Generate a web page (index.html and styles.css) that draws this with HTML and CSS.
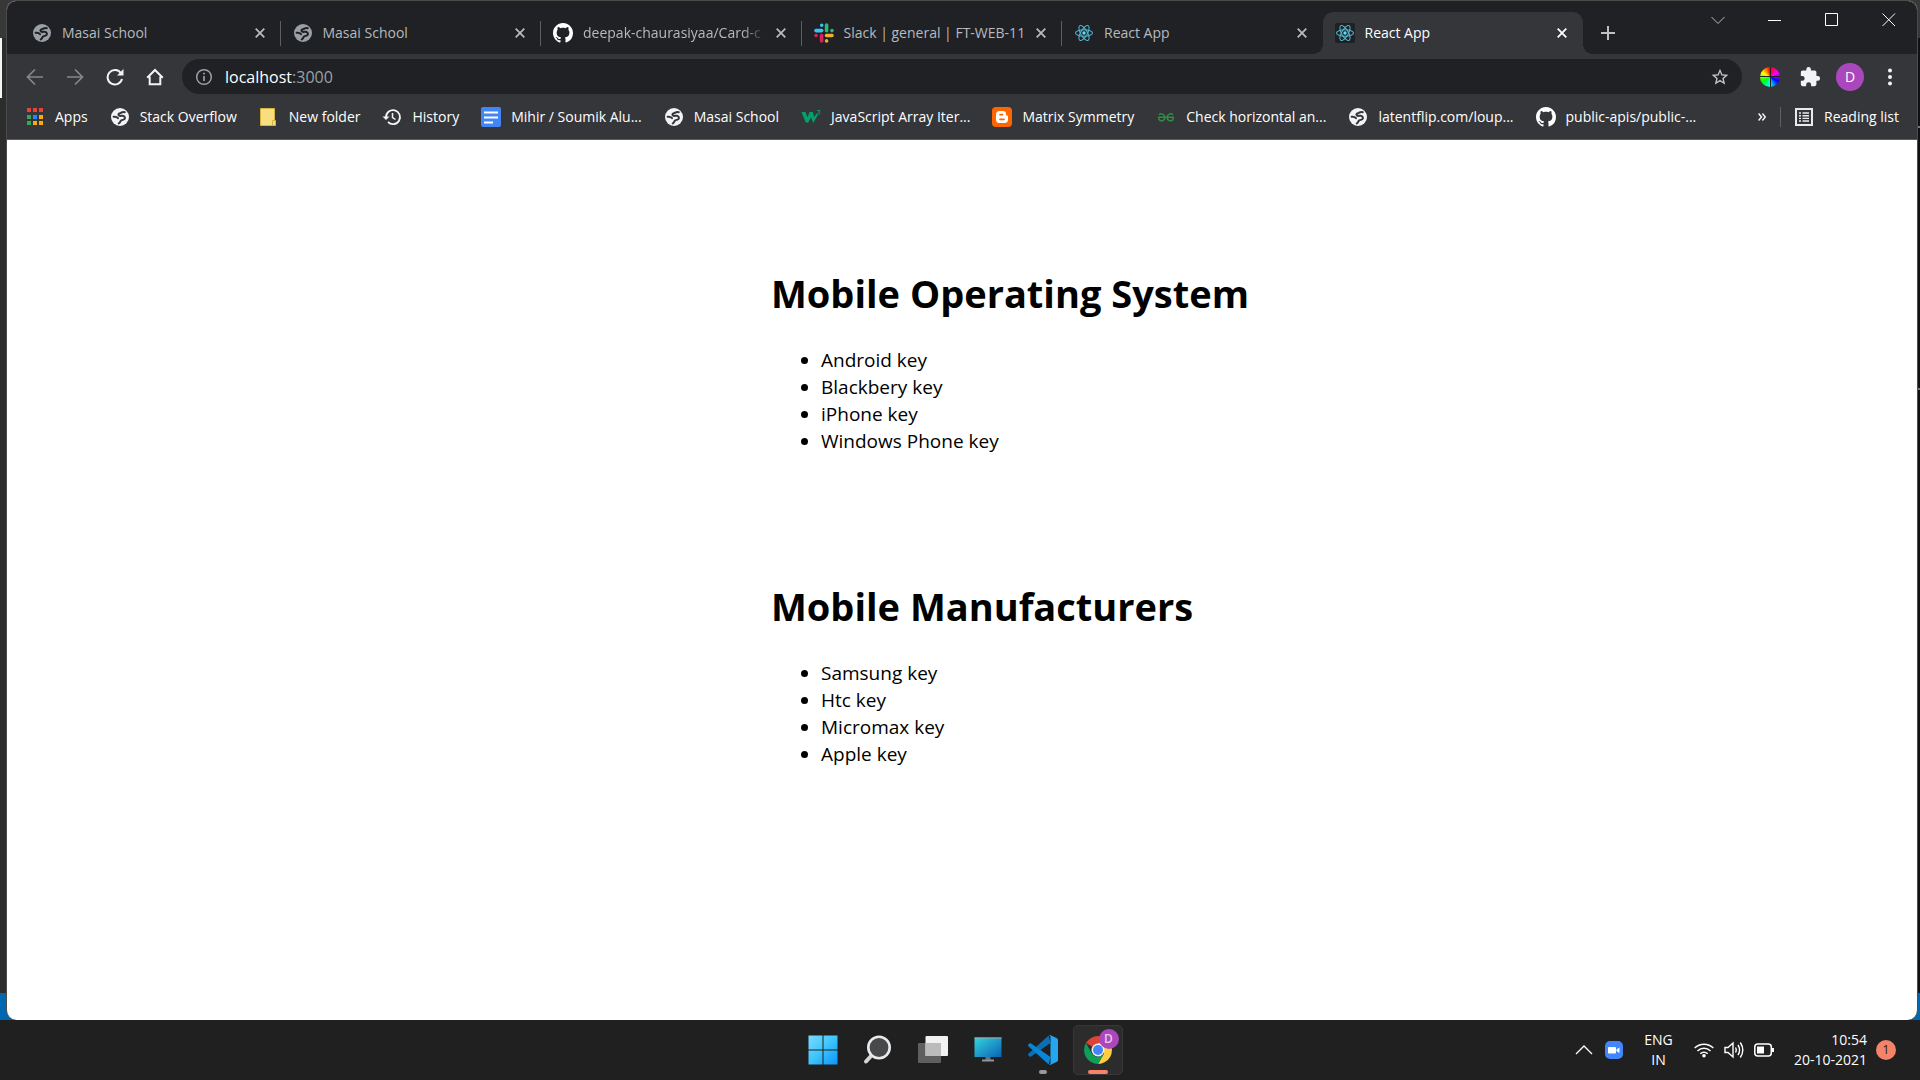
FILE: index.html
```html
<!DOCTYPE html>
<html lang="en">
<head>
<meta charset="utf-8">
<title>React App</title>
<link rel="stylesheet" href="styles.css">
</head>
<body>
<svg class="sprite" aria-hidden="true">
  <symbol id="globe" viewBox="0 0 18 18"><circle cx="9" cy="9" r="9" fill="currentColor"/><path class="globe-cut" d="M13.800 4.200C11 3.200 10.500 5 9 5.300S6.800 6.600 8 7.600s3.600-.6 5 .6 1.200 2.800-.6 3.400-2.600.6-3 1.700-1 1.700-1.700 2.200M2.600 8.800c1.600-.4 3.400.2 4.400 1.400"/></symbol>
  <symbol id="close" viewBox="0 0 10 10"><path d="M.7.7l8.600 8.600M9.300.7L.7 9.300" stroke="currentColor" stroke-width="1.800"/></symbol>
  <symbol id="github" viewBox="0 0 16 16"><path fill="currentColor" d="M8 0C3.580 0 0 3.580 0 8c0 3.540 2.290 6.530 5.470 7.590.4.070.55-.17.55-.38 0-.19-.01-.82-.01-1.490-2.010.37-2.530-.49-2.690-.94-.09-.23-.48-.94-.82-1.130-.28-.15-.68-.52-.01-.53.63-.01 1.080.58 1.230.82.72 1.210 1.870.87 2.330.66.070-.52.28-.87.51-1.070-1.780-.2-3.640-.89-3.640-3.950 0-.87.31-1.590.82-2.150-.08-.2-.36-1.020.08-2.120 0 0 .67-.21 2.200.82.64-.18 1.320-.27 2-.27s1.360.09 2 .27c1.530-1.040 2.200-.82 2.200-.82.44 1.100.16 1.920.08 2.120.51.56.82 1.270.82 2.150 0 3.070-1.870 3.750-3.650 3.950.29.25.54.73.54 1.480 0 1.070-.01 1.930-.01 2.200 0 .21.15.46.55.38A8.010 8.010 0 0 0 16 8c0-4.420-3.580-8-8-8z"/></symbol>
  <symbol id="react" viewBox="0 0 20 20"><rect width="20" height="20" rx="2" fill="#202124"/><g fill="none" stroke="#53b4cd" stroke-width="1.100"><ellipse cx="10" cy="10" rx="8.500" ry="3.300"/><ellipse cx="10" cy="10" rx="8.500" ry="3.300" transform="rotate(60 10 10)"/><ellipse cx="10" cy="10" rx="8.500" ry="3.300" transform="rotate(120 10 10)"/></g><circle cx="10" cy="10" r="1.700" fill="#61dafb"/></symbol>
</svg>

<div class="desktop">
  <div class="window">
    <header class="tabstrip">
      <div class="tabs">
        <div class="tab"><svg class="fav globe muted"><use href="#globe"/></svg><span class="title">Masai School</span><button class="x" aria-label="Close tab"><svg><use href="#close"/></svg></button></div>
        <div class="tab"><svg class="fav globe muted"><use href="#globe"/></svg><span class="title">Masai School</span><button class="x" aria-label="Close tab"><svg><use href="#close"/></svg></button></div>
        <div class="tab"><svg class="fav white"><use href="#github"/></svg><span class="title fade">deepak-chaurasiyaa/Card-c</span><button class="x" aria-label="Close tab"><svg><use href="#close"/></svg></button></div>
        <div class="tab"><svg class="fav" viewBox="0 0 20 20"><g stroke-width="3.600" stroke-linecap="round"><path d="M2 7.600h5.700M7.700 2.200v.1" stroke="#36c5f0"/><path d="M12.600 2v5.700M18 7.600h-.1" stroke="#2eb67d"/><path d="M18 12.500h-5.500M12.600 18v-.1" stroke="#ecb22e"/><path d="M7.600 18v-5.500M2 12.500h.1" stroke="#e01e5a"/></g></svg><span class="title">Slack | general | FT-WEB-11</span><button class="x" aria-label="Close tab"><svg><use href="#close"/></svg></button></div>
        <div class="tab before-active"><svg class="fav"><use href="#react"/></svg><span class="title">React App</span><button class="x" aria-label="Close tab"><svg><use href="#close"/></svg></button></div>
        <div class="tab active"><svg class="fav"><use href="#react"/></svg><span class="title">React App</span><button class="x" aria-label="Close tab"><svg><use href="#close"/></svg></button></div>
      </div>
      <button class="new-tab" aria-label="New tab"><svg width="16" height="16" viewBox="0 0 16 16"><path d="M8 1v14M1 8h14" stroke="#bdc1c6" stroke-width="2"/></svg></button>
      <div class="caption">
        <button aria-label="Search tabs"><svg width="14" height="14" viewBox="0 0 14 14"><path d="M.5 4l6.500 6.500L13.500 4" fill="none" stroke="#bbb"/></svg></button>
        <button aria-label="Minimize"><svg width="14" height="14" viewBox="0 0 14 14"><path d="M0 7.500h13" stroke="#fff"/></svg></button>
        <button aria-label="Maximize"><svg width="14" height="14" viewBox="0 0 14 14"><path d="M.5.5h12v12H.5z" fill="none" stroke="#fff"/></svg></button>
        <button aria-label="Close"><svg width="14" height="14" viewBox="0 0 14 14"><path d="M.5.5l12.500 12.500M13 .5L.5 13" stroke="#fff"/></svg></button>
      </div>
    </header>

    <div class="toolbar">
      <button class="nav" aria-label="Back"><svg width="18" height="18" viewBox="0 0 18 18"><path d="M17 9H2M9 1.500L1.500 9 9 16.500" fill="none" stroke="#85878a" stroke-width="1.700"/></svg></button>
      <button class="nav" aria-label="Forward"><svg width="18" height="18" viewBox="0 0 18 18"><path d="M1 9h15M9 1.500L16.500 9 9 16.500" fill="none" stroke="#85878a" stroke-width="1.700"/></svg></button>
      <button class="nav" aria-label="Reload"><svg width="18" height="18" viewBox="0 0 18 18"><path d="M15 5.200A7.300 7.300 0 1 0 16 11" fill="none" stroke="#f1f3f4" stroke-width="2"/><path d="M17.500 1v6.500H11z" fill="#f1f3f4"/></svg></button>
      <button class="nav" aria-label="Home"><svg width="18" height="18" viewBox="0 0 18 18"><path d="M3.700 8.500V16.300h10.600V8.500M1.200 9.800L9 2l7.800 7.800" fill="none" stroke="#f1f3f4" stroke-width="2"/></svg></button>
      <div class="omnibox">
        <svg width="18" height="18" viewBox="0 0 18 18"><circle cx="9" cy="9" r="7.300" fill="none" stroke="#9aa0a6" stroke-width="1.500"/><path d="M9 8v5M9 4.800v1.700" stroke="#9aa0a6" stroke-width="1.700"/></svg>
        <div class="url">localhost<span>:3000</span></div>
        <button aria-label="Bookmark this page"><svg width="20" height="20" viewBox="0 0 24 24"><path fill="#c4c7ca" d="M22 9.240l-7.190-.62L12 2 9.190 8.630 2 9.240l5.460 4.730L5.820 21 12 17.270 18.180 21l-1.630-7.030L22 9.240zM12 15.400l-3.760 2.270 1-4.280-3.320-2.880 4.380-.38L12 6.100l1.710 4.040 4.380.38-3.320 2.880 1 4.280L12 15.400z"/></svg></button>
      </div>
      <button class="ext" aria-label="Color picker extension"><span class="wheel"></span></button>
      <button class="ext" aria-label="Extensions"><svg width="22" height="22" viewBox="0 0 24 24"><path fill="#f1f3f4" d="M20.500 11H19V7c0-1.100-.9-2-2-2h-4V3.500a2.500 2.500 0 0 0-5 0V5H4c-1.100 0-1.990.9-1.990 2v3.800H3.500a2.700 2.700 0 0 1 0 5.400H2V20c0 1.100.9 2 2 2h3.800v-1.500a2.700 2.700 0 0 1 5.400 0V22H17c1.100 0 2-.9 2-2v-4h1.500a2.500 2.500 0 0 0 0-5z"/></svg></button>
      <button class="ext" aria-label="Profile"><span class="avatar">D</span></button>
      <button class="ext" aria-label="Menu"><svg width="6" height="18" viewBox="0 0 6 18"><g fill="#f1f3f4"><circle cx="3" cy="2.500" r="2"/><circle cx="3" cy="9" r="2"/><circle cx="3" cy="15.500" r="2"/></g></svg></button>
    </div>

    <nav class="bookmarks">
      <a href="#"><svg class="ico" viewBox="0 0 20 20"><path fill="#ea4335" d="M2 1h4v4H2zM8 1h4v4H8zM14 1h4v4h-4z"/><path fill="#34a853" d="M2 8h4v4H2zM2 14h4v4H2z"/><path fill="#1a8cff" d="M8 8h4v4H8z"/><path fill="#fbab09" d="M14 8h4v4h-4zM8 14h4v4H8zM14 14h4v4h-4z"/></svg>Apps</a>
      <a href="#"><svg class="ico globe"><use href="#globe"/></svg>Stack Overflow</a>
      <a href="#"><svg class="ico" viewBox="0 0 20 20"><path fill="#f9de80" stroke="#d9b23d" d="M1.500 1.500h14v12h1v5h-15z"/><path d="M13.500 18v-4.500h2" fill="none" stroke="#d9b23d"/></svg>New folder</a>
      <a href="#"><svg class="ico" viewBox="0 0 20 20"><path d="M4 10A7 7 0 1 1 6 15" fill="none" stroke="#f1f3f4" stroke-width="1.800"/><path d="M.5 9.500h7L4 13z" fill="#f1f3f4"/><path d="M10.500 6v4.500l3 2" fill="none" stroke="#f1f3f4" stroke-width="1.500"/></svg>History</a>
      <a href="#"><svg class="ico" viewBox="0 0 20 20"><rect width="20" height="20" rx="2" fill="#4285f4"/><path d="M3 5.500h14M3 10.500h14M3 15.500h9" stroke="#fff" stroke-width="2"/></svg>Mihir / Soumik Alu...</a>
      <a href="#"><svg class="ico globe"><use href="#globe"/></svg>Masai School</a>
      <a href="#"><svg class="ico" viewBox="0 0 20 20"><path fill="#04a06c" d="M.5 5h4l2 5.500L8.500 5h3.300l1.200 5 3.500-4.500v3L12.300 16 10 10.500 7 16 4.500 15z"/><path d="M16.300 3.500H19l-1.300 1.700c2 .2 1.500 2.600-1.200 2" fill="none" stroke="#04a06c"/></svg>JavaScript Array Iter...</a>
      <a href="#"><svg class="ico" viewBox="0 0 20 20"><rect width="20" height="20" rx="4" fill="#ff6600"/><path fill="#fff" d="M7.500 4h3.300A3.200 3.200 0 0 1 14 7.200c0 1.300.3 1.300 1.300 1.300.5 0 .7.3.7.8v3.200a3.500 3.500 0 0 1-3.500 3.500h-5A3.500 3.500 0 0 1 4 12.500v-5A3.500 3.500 0 0 1 7.500 4z"/><path d="M8 7.700h2.500M8 12.300h4" stroke="#ff6600" stroke-width="1.700" stroke-linecap="round"/></svg>Matrix Symmetry</a>
      <a href="#"><svg class="ico" viewBox="0 0 20 20"><path d="M2 10.300h16M3 7.800c2-1.800 5.800-1 5.800 2.700 0 3.500-4.300 4.300-5.800 1.800v-2M17 7.800c-2-1.800-5.800-1-5.800 2.700 0 3.500 4.300 4.300 5.800 1.800v-2" fill="none" stroke="#2f8d46" stroke-width="1.500"/></svg>Check horizontal an...</a>
      <a href="#"><svg class="ico globe"><use href="#globe"/></svg>latentflip.com/loup...</a>
      <a href="#"><svg class="ico white"><use href="#github"/></svg>public-apis/public-...</a>
      <button class="more" aria-label="More bookmarks"><svg width="8" height="8" viewBox="0 0 8 8"><path d="M.6.6L3.500 4 .6 7.400M4.400.6L7.300 4 4.400 7.400" fill="none" stroke="#f1f3f4" stroke-width="1.500"/></svg></button>
      <button class="reading"><svg width="18" height="18" viewBox="0 0 18 18"><path d="M1 1h16v16H1z" fill="none" stroke="#e8eaed" stroke-width="2"/><path d="M4 5h2M7.500 5H14M4 7.700h2M7.500 7.700H14M4 10.400h2M7.500 10.400H14M4 13h2M7.500 13H14" stroke="#e8eaed" stroke-width="1.400"/></svg>Reading list</button>
    </nav>

    <main class="page">
      <section>
        <h1>Mobile Operating System</h1>
        <ul><li>Android key</li><li>Blackbery key</li><li>iPhone key</li><li>Windows Phone key</li></ul>
      </section>
      <section>
        <h1>Mobile Manufacturers</h1>
        <ul><li>Samsung key</li><li>Htc key</li><li>Micromax key</li><li>Apple key</li></ul>
      </section>
    </main>
  </div>
</div>

<footer class="taskbar">
  <div class="apps">
    <button aria-label="Start"><svg width="30" height="30" viewBox="0 0 30 30"><defs><linearGradient id="win" gradientUnits="userSpaceOnUse" x1="0" y1="0" x2="30" y2="30"><stop offset="0" stop-color="#7fdcff"/><stop offset=".5" stop-color="#3cc4fb"/><stop offset="1" stop-color="#0a93fb"/></linearGradient></defs><path fill="url(#win)" d="M.5.5h14v14H.5zM15.500.5h14v14h-14zM.5 15.500h14v14H.5zM15.500 15.500h14v14h-14z"/></svg></button>
    <button aria-label="Search"><svg width="30" height="30" viewBox="0 0 30 30"><path d="M9 20L3 26.500" stroke="#d5d8db" stroke-width="4" stroke-linecap="round"/><circle cx="16" cy="12.500" r="10.700" fill="#48494b" stroke="#e8eaec" stroke-width="2.600"/></svg></button>
    <button aria-label="Task view"><svg width="30" height="30" viewBox="0 0 30 30"><rect y="8" width="23" height="20" rx="1" fill="#5f5f5f"/><rect x="7.500" y="1" width="22.500" height="20" rx="1" fill="#f1f1f1"/><path d="M7.500 8H23v13H7.500z" fill="#bbb"/></svg></button>
    <button aria-label="Desktop"><svg width="30" height="30" viewBox="0 0 30 30"><defs><linearGradient id="pc" x2="1" y2="1"><stop stop-color="#32d5dd"/><stop offset="1" stop-color="#0b62b5"/></linearGradient></defs><path d="M12.500 21h5v4h-5z" fill="#697076"/><path d="M9 25.500h12" stroke="#8d949a" stroke-width="2"/><rect x="1.500" y="2.500" width="27" height="19.500" fill="url(#pc)"/><path d="M1.500 3h27" stroke="#9aa8ad"/></svg></button>
    <button class="running" aria-label="Visual Studio Code"><svg width="30" height="30" viewBox="0 0 100 100"><path fill="#0a6fb5" d="M75 27L10.500 71.800c-1.600 1.200-4 1.200-5.400-.1L1.300 68.200c-1.800-1.600-1.800-4.500 0-6.100L69 1.500z"/><path fill="#0a84d4" d="M75 73L10.500 28.200c-1.600-1.200-4-1.200-5.400.1L1.300 31.800c-1.800 1.600-1.800 4.500 0 6.100L69 98.500z"/><path fill="#24a5f2" d="M71 99.300c-1.600-.6-2.500-1.700-2.500-1.700C70.800 99.900 75 98.300 75 95V5c0-3.300-4-4.900-6.300-2.600 0 0 .8-1.200 2.300-1.700 1.500-.6 3.200-.5 4.700.2l20.600 9.900A6.200 6.200 0 0 1 100 16.400v67.200c0 2.400-1.400 4.600-3.500 5.600L75.700 99.100c-1.500.7-3.200.8-4.700.2z"/></svg></button>
    <button class="current" aria-label="Google Chrome"><svg width="28" height="28" viewBox="0 0 28 28"><path fill="#db4437" d="M14 14L1.900 7A14 14 0 0 1 26.100 7z"/><path fill="#ffcd40" d="M14 7h12.100A14 14 0 0 1 14 28l6-10.500z"/><path fill="#0f9d58" d="M1.900 7L8 17.500c2 3.500 7 5 12 0L14 28A14 14 0 0 1 1.900 7z"/><circle cx="14" cy="14" r="6.500" fill="#f1f1f1"/><circle cx="14" cy="14" r="5" fill="#4285f4"/></svg><span class="badge">D</span></button>
  </div>
  <div class="tray">
    <button aria-label="Show hidden icons"><svg width="18" height="10" viewBox="0 0 18 10"><path d="M1 9l8-8 8 8" fill="none" stroke="#fff" stroke-width="1.300"/></svg></button>
    <button class="zoom" aria-label="Zoom"><svg width="18" height="18" viewBox="0 0 18 18"><rect width="18" height="18" rx="5" fill="#4087fc"/><rect x="3" y="6" width="8" height="6.500" rx="1" fill="#fff"/><path d="M11.500 8.500l3-2v5.500l-3-2z" fill="#fff"/></svg></button>
    <div class="lang">ENG<br>IN</div>
    <button class="status" aria-label="Network, sound and battery">
      <svg width="20" height="16" viewBox="0 0 20 16"><g fill="none" stroke="#fff" stroke-width="1.500"><path d="M.7 6a13.200 13.200 0 0 1 18.600 0M3.500 9a9.300 9.300 0 0 1 13 0M6.300 11.800a5.300 5.300 0 0 1 7.400 0"/></g><circle cx="10" cy="13.700" r="1.800" fill="#fff"/></svg>
      <svg width="20" height="18" viewBox="0 0 20 18"><g fill="none" stroke="#fff" stroke-width="1.400"><path d="M1 6.500h3L9 2v14l-5-4.500H1zM11.500 6.500q1.500 2.500 0 5M14 4q3.200 5 0 10M16.300 1.500q5 7.500 0 15"/></g></svg>
      <svg width="20" height="14" viewBox="0 0 20 14"><rect x=".8" y="1" width="16.500" height="12" rx="3" fill="none" stroke="#fff" stroke-width="1.500"/><path d="M3 3.500h7v7H3zM18 5h2v4h-2z" fill="#fff"/></svg>
    </button>
    <div class="clock">10:54<br>20-10-2021</div>
    <span class="count">1</span>
  </div>
</footer>
</body>
</html>
```
FILE: styles.css
```css
* { box-sizing: border-box; }
html, body { height: 100%; }
body {
  margin: 0;
  display: flex;
  flex-direction: column;
  font-family: "Open Sans", "Noto Sans", sans-serif;
  background: #202020;
}
.sprite { position: absolute; width: 0; height: 0; }
button {
  border: 0;
  padding: 0;
  background: none;
  color: inherit;
  font: inherit;
  display: flex;
  align-items: center;
  justify-content: center;
}
svg { flex: none; display: block; }

.desktop {
  flex: 1;
  display: flex;
  padding: 0 2px 0 6px;
  background:
    linear-gradient(#0067b3, #0067b3) bottom / 100% 27px no-repeat,
    linear-gradient(#f5f5f5, #f5f5f5) 0 38px / 2px 60px no-repeat,
    linear-gradient(#777, #777) 100% 126px / 3px 2px no-repeat,
    linear-gradient(#777, #777) 100% 388px / 3px 2px no-repeat,
    linear-gradient(#383838 38px, transparent 38px),
    linear-gradient(90deg, #2c2c2c 50%, #111 50%);
}
.window {
  flex: 1;
  min-width: 0;
  display: flex;
  flex-direction: column;
  border: 1px solid #4b4c4a;
  border-bottom: 0;
  border-radius: 10px;
  overflow: hidden;
  background: #fff;
}

.tabstrip {
  display: flex;
  height: 53px;
  padding-left: 13px;
  background: #202124;
}
.tabs { display: flex; flex: 0 1 1563px; min-width: 0; padding-top: 11px; }
.tab {
  flex: 1;
  min-width: 0;
  position: relative;
  display: flex;
  align-items: center;
  gap: 10px;
  padding: 0 14px 0 12px;
  color: #b6babf;
  font-size: 14px;
}
.tab:not(.active):not(.before-active)::after {
  content: "";
  position: absolute;
  right: 0;
  top: 9px;
  height: 25px;
  border-right: 1px solid #5c5e62;
}
.tab.active {
  background: #35363a;
  color: #fff;
  border-radius: 10px 10px 0 0;
}
.tab.active::before, .tab.active::after {
  content: "";
  position: absolute;
  bottom: 0;
  width: 10px;
  height: 10px;
}
.tab.active::before { left: -10px; background: radial-gradient(circle at 0 0, transparent 10px, #35363a 10px); }
.tab.active::after { right: -10px; background: radial-gradient(circle at 100% 0, transparent 10px, #35363a 10px); }
.fav, .ico { width: 20px; height: 20px; flex: none; }
.globe { padding: 1px; color: #f1f3f4; --cut: #35363a; }
.globe.muted { color: #9aa0a6; --cut: #202124; }
.globe-cut { fill: none; stroke: var(--cut); stroke-width: 2px; stroke-linecap: round; }
.white { color: #fff; }
.title { flex: 1; min-width: 0; overflow: hidden; white-space: nowrap; line-height: 20px; }
.title.fade { mask-image: linear-gradient(90deg, #000 88%, transparent 101%); }
.x { width: 14px; height: 20px; }
.x svg { width: 10px; height: 10px; }
.new-tab { width: 50px; padding-top: 11px; }
.caption { margin-left: auto; display: flex; height: 37px; }
.caption button { width: 57px; }

.toolbar {
  display: flex;
  align-items: center;
  height: 40px;
  padding: 5px 7px 0 8px;
  background: #35363a;
}
.nav { width: 40px; height: 34px; }
.omnibox {
  flex: 1;
  display: flex;
  align-items: center;
  gap: 12px;
  height: 35px;
  margin: 0 8px 0 7px;
  padding: 0 12px 0 13px;
  border-radius: 18px;
  background: #202124;
}
.url { flex: 1; color: #fff; font-size: 16px; line-height: 24px; }
.url span { color: #9aa0a6; }
.ext { width: 40px; height: 34px; }
.wheel {
  width: 20px;
  height: 20px;
  border-radius: 50%;
  background:
    linear-gradient(#222, #222) center / 1px 20px no-repeat,
    linear-gradient(#222, #222) center / 20px 1px no-repeat,
    conic-gradient(#f00, #f0f, #00f, #0ff, #0f0, #ff0, #f00);
}
.avatar {
  width: 28px;
  height: 28px;
  border-radius: 50%;
  background: #ab47bc;
  color: #fff;
  font-size: 14px;
  line-height: 28px;
}

.bookmarks {
  display: flex;
  align-items: center;
  gap: 22px;
  height: 46px;
  padding: 0 18px;
  border-bottom: 1px solid #5b5c5f;
  background: #35363a;
  color: #fff;
  font-size: 14px;
  line-height: 20px;
  white-space: nowrap;
}
.bookmarks a { display: flex; gap: 10px; color: inherit; text-decoration: none; }
.more { margin-left: auto; height: 20px; }
.reading { gap: 11px; padding-left: 14px; margin-left: -8px; border-left: 1px solid #5f6063; }

.page { flex: 1; padding: 127px 20px 0 40%; color: #000; }
.page section { margin-bottom: 125px; }
.page h1 { margin: 0 0 27px; font-size: 38px; line-height: 53px; }
.page ul { margin: 0; padding-left: 50px; font-size: 19px; line-height: 27px; }

.taskbar {
  display: grid;
  grid-template-columns: 1fr auto 1fr;
  align-items: center;
  height: 60px;
  background: #202020;
  color: #fff;
}
.apps { grid-column: 2; display: flex; gap: 5px; }
.apps button { position: relative; width: 50px; height: 50px; border-radius: 5px; }
.apps .current { background: #2c2c2c; border: 1px solid #383838; }
.running::after, .current::after {
  content: "";
  position: absolute;
  bottom: 1px;
  width: 8px;
  height: 4px;
  border-radius: 2px;
  background: #999;
}
.current::after { bottom: 0; width: 20px; background: #f4836a; }
.badge {
  position: absolute;
  top: 3px;
  right: 3px;
  width: 20px;
  height: 20px;
  border-radius: 50%;
  background: #ab47bc;
  color: #e7c8ec;
  font-size: 12px;
  font-weight: 600;
  line-height: 20px;
}
.tray {
  justify-self: end;
  display: flex;
  align-items: center;
  padding-right: 24px;
  font-size: 14px;
  line-height: 20px;
}
.zoom { margin-left: 12px; }
.lang { width: 71px; text-align: center; }
.status { gap: 10px; }
.clock { width: 93px; text-align: right; }
.count {
  width: 20px;
  height: 20px;
  margin-left: 9px;
  border-radius: 50%;
  background: #f4836a;
  color: #202020;
  font-size: 12px;
  text-align: center;
}
```
